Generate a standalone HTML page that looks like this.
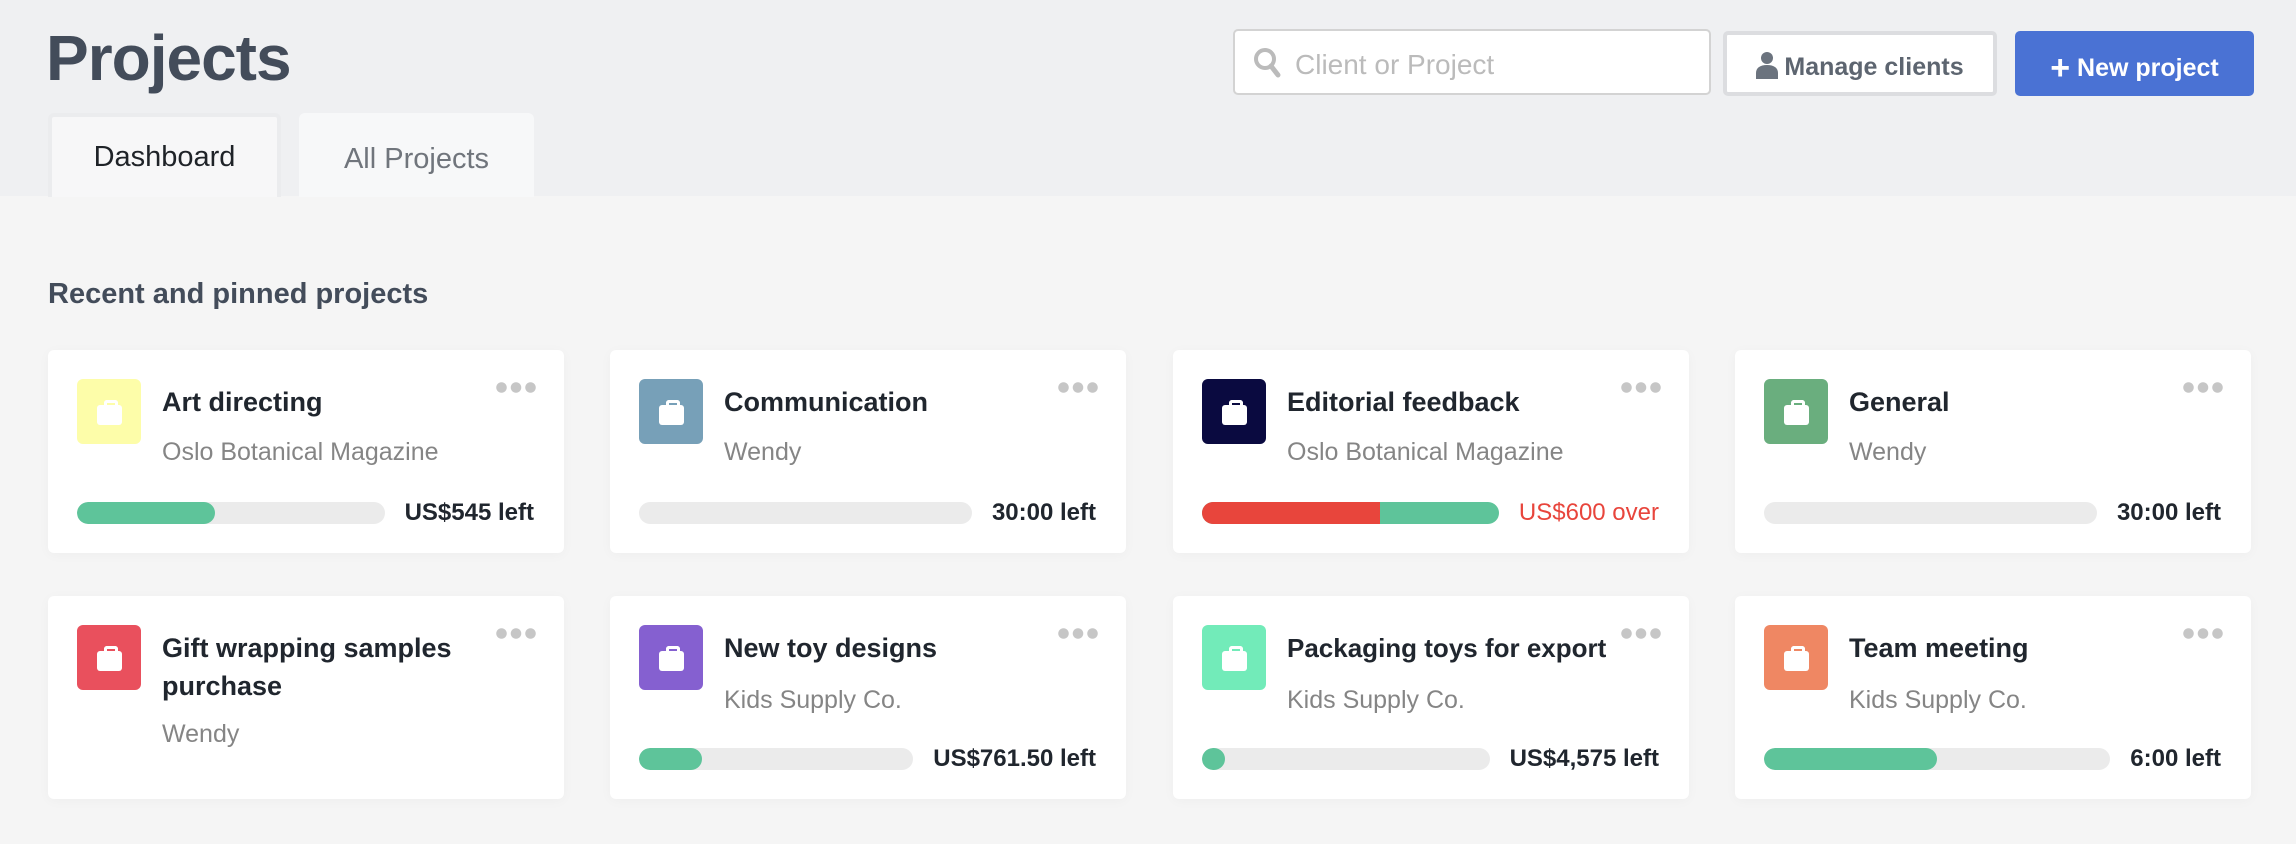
<!DOCTYPE html>
<html><head><meta charset="utf-8"><style>
*{box-sizing:border-box;margin:0;padding:0}
body{width:2296px;height:844px;background:#f5f5f5;font-family:"Liberation Sans",sans-serif;position:relative;overflow:hidden}
.hdr{position:absolute;left:0;top:0;width:2296px;height:196px;background:#eff0f2}
h1{position:absolute;left:46px;top:21px;font-size:64px;font-weight:bold;color:#434c5a;letter-spacing:-1px}
.tab{position:absolute;top:113px;height:84px;border-radius:6px 6px 0 0;font-size:29px;text-align:center;padding-top:26px}
.t1{left:48px;width:233px;background:#f7f7f8;color:#1f2328;border:4px solid #ebecee;border-bottom:none;padding-top:24px}
.t2{left:299px;width:235px;background:#f7f8f9;color:#70757c;padding-top:30px}
.search{position:absolute;left:1233px;top:29px;width:478px;height:66px;background:#fff;border:2px solid #d3d3d3;border-radius:5px;color:#bbb;font-size:28px;padding:18px 0 0 60px}
.btn{position:absolute;top:31px;height:65px;border-radius:5px;font-size:25px;font-weight:bold;padding-top:18px;text-align:center}
.mc{left:1723px;width:274px;background:#fff;border:4px solid #dcdde0;color:#5d6570;padding-top:16px}
.np{left:2015px;width:239px;background:#4a72d4;color:#fff}
h2{position:absolute;left:48px;top:278px;font-size:29px;font-weight:bold;color:#434c5a}
.card{position:absolute;width:516px;height:203px;background:#fff;border-radius:6px;box-shadow:0 2px 12px rgba(0,0,0,.03)}
.ic{position:absolute;left:29px;top:29px;width:64px;height:65px;border-radius:6px}
.ic:before{content:"";position:absolute;left:20px;top:26px;width:25px;height:20px;background:#fff;border-radius:3px}
.ic:after{content:"";position:absolute;left:27px;top:21px;width:8px;height:5px;border:3px solid #fff;border-bottom:none;border-radius:3px 3px 0 0}
.tt{position:absolute;left:114px;top:33px;font-size:27px;font-weight:bold;color:#20262e;line-height:38px;width:330px}
.st{position:absolute;left:114px;top:88px;font-size:25px;color:#858585}
.dots{position:absolute;right:28px;top:32px;width:40px;height:11px;background:radial-gradient(circle at 5.5px 5.5px,#c6c6c6 5px,transparent 5.5px) 0 0/14.5px 11px repeat-x}
.row{position:absolute;left:29px;right:30px;top:149px;display:flex;align-items:center;gap:20px}
.bar{flex:1;height:22px;background:#ebebeb;border-radius:11px;overflow:hidden;display:flex}
.g{background:#5ec49a;height:100%;border-radius:11px}
.r{background:#e8453c;height:100%}
.amt{font-size:24px;font-weight:bold;color:#20262e;white-space:nowrap}
</style></head><body>
<div class="hdr"></div>
<h1>Projects</h1>
<div class="tab t1">Dashboard</div>
<div class="tab t2">All Projects</div>
<div class="search"><svg style="position:absolute;left:18px;top:16px" width="28" height="32" viewBox="0 0 28 32"><circle cx="12" cy="12" r="9" fill="none" stroke="#bbb" stroke-width="4"/><path d="M18 19l7 9" stroke="#bbb" stroke-width="5" stroke-linecap="round"/></svg>Client or Project</div>
<div class="btn mc"><svg style="vertical-align:-4px;margin-right:6px" width="22" height="28" viewBox="0 0 22 28"><circle cx="11" cy="7" r="6" fill="#6b737e"/><path d="M0 28v-6c0-5 4-8 11-8s11 3 11 8v6z" fill="#6b737e"/></svg>Manage clients</div>
<div class="btn np"><span style="font-size:34px;vertical-align:-3px">+</span> New project</div>
<h2>Recent and pinned projects</h2>

<div class="card" style="left:48px;top:350px"><div class="ic" style="background:#fdfda9"></div><div class="tt">Art directing</div><div class="st">Oslo Botanical Magazine</div><div class="dots"></div><div class="row"><div class="bar"><div class="g" style="width:45%"></div></div><div class="amt">US$545 left</div></div></div>
<div class="card" style="left:610px;top:350px"><div class="ic" style="background:#77a0b8"></div><div class="tt">Communication</div><div class="st">Wendy</div><div class="dots"></div><div class="row"><div class="bar"></div><div class="amt">30:00 left</div></div></div>
<div class="card" style="left:1173px;top:350px"><div class="ic" style="background:#0a0a40"></div><div class="tt">Editorial feedback</div><div class="st">Oslo Botanical Magazine</div><div class="dots"></div><div class="row"><div class="bar" style="background:#5ec49a"><div class="r" style="width:60%"></div></div><div class="amt" style="color:#e8453c;font-weight:normal">US$600 over</div></div></div>
<div class="card" style="left:1735px;top:350px"><div class="ic" style="background:#6aae7e"></div><div class="tt">General</div><div class="st">Wendy</div><div class="dots"></div><div class="row"><div class="bar"></div><div class="amt">30:00 left</div></div></div>

<div class="card" style="left:48px;top:596px"><div class="ic" style="background:#e9505d"></div><div class="tt">Gift wrapping samples purchase</div><div class="st" style="top:124px">Wendy</div><div class="dots"></div></div>
<div class="card" style="left:610px;top:596px"><div class="ic" style="background:#8560d0"></div><div class="tt">New toy designs</div><div class="st" style="top:90px">Kids Supply Co.</div><div class="dots"></div><div class="row"><div class="bar"><div class="g" style="width:23%"></div></div><div class="amt">US$761.50 left</div></div></div>
<div class="card" style="left:1173px;top:596px"><div class="ic" style="background:#72ebb9"></div><div class="tt" style="font-size:26px">Packaging toys for export</div><div class="st" style="top:90px">Kids Supply Co.</div><div class="dots"></div><div class="row"><div class="bar"><div class="g" style="width:8%"></div></div><div class="amt">US$4,575 left</div></div></div>
<div class="card" style="left:1735px;top:596px"><div class="ic" style="background:#ef8763"></div><div class="tt">Team meeting</div><div class="st" style="top:90px">Kids Supply Co.</div><div class="dots"></div><div class="row"><div class="bar"><div class="g" style="width:50%"></div></div><div class="amt">6:00 left</div></div></div>
</body></html>
